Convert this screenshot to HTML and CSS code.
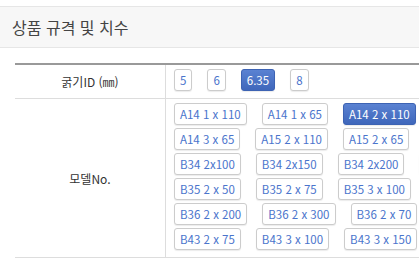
FILE: index.html
```html
<!DOCTYPE html>
<html lang="ko">
<head>
    <meta charset="UTF-8">
    <meta name="viewport" content="width=device-width, initial-scale=1.0">
    <title>상품 규격 및 치수</title>
    <link rel="stylesheet" href="styles.css">
</head>
<body>
    <!-- Section Title -->
    <div class="section-title">
        <h2>상품 규격 및 치수</h2>
    </div>

    <!-- Spec Table -->
    <div class="spec-wrap">
        <table class="spec-table">
            <tr class="size-row">
                <th>굵기ID (㎜)</th>
                <td>
                    <div class="opt-row">
                        <a href="#" class="opt-btn">5</a>
                        <a href="#" class="opt-btn">6</a>
                        <a href="#" class="opt-btn active">6.35</a>
                        <a href="#" class="opt-btn">8</a>
                    </div>
                </td>
            </tr>
            <tr>
                <th>모델No.</th>
                <td>
                    <div class="opt-row">
                        <a href="#" class="opt-btn">A14 1 x 110</a>
                        <a href="#" class="opt-btn">A14 1 x 65</a>
                        <a href="#" class="opt-btn active">A14 2 x 110</a>
                    </div>
                    <div class="opt-row">
                        <a href="#" class="opt-btn">A14 3 x 65</a>
                        <a href="#" class="opt-btn">A15 2 x 110</a>
                        <a href="#" class="opt-btn">A15 2 x 65</a>
                    </div>
                    <div class="opt-row">
                        <a href="#" class="opt-btn">B34 2x100</a>
                        <a href="#" class="opt-btn">B34 2x150</a>
                        <a href="#" class="opt-btn">B34 2x200</a>
                        <a href="#" class="opt-btn">B34 3x100</a>
                    </div>
                    <div class="opt-row">
                        <a href="#" class="opt-btn">B35 2 x 50</a>
                        <a href="#" class="opt-btn">B35 2 x 75</a>
                        <a href="#" class="opt-btn">B35 3 x 100</a>
                        <a href="#" class="opt-btn">B35 3 x 50</a>
                    </div>
                    <div class="opt-row">
                        <a href="#" class="opt-btn">B36 2 x 200</a>
                        <a href="#" class="opt-btn">B36 2 x 300</a>
                        <a href="#" class="opt-btn">B36 2 x 70</a>
                    </div>
                    <div class="opt-row">
                        <a href="#" class="opt-btn">B43 2 x 75</a>
                        <a href="#" class="opt-btn">B43 3 x 100</a>
                        <a href="#" class="opt-btn">B43 3 x 150</a>
                    </div>
                </td>
            </tr>
        </table>
    </div>
</body>
</html>
```

FILE: styles.css
```css
/* General Styles */
body {
    margin: 0;
    padding-top: 6px;
    font-family: "Noto Sans CJK KR", "Noto Sans", sans-serif;
    color: #333;
    background: #fff;
    overflow: hidden;
}

/* Section Title */
.section-title {
    background-color: #f7f7f7;
    border-top: 1px solid #e6e6e6;
    border-bottom: 1px solid #e6e6e6;
    padding: 0 12px;
    height: 40px;
    display: flex;
    align-items: center;
}
.section-title h2 {
    margin: 0;
    font-size: 16px;
    font-weight: normal;
    color: #444;
}

/* Spec Table */
.spec-wrap {
    margin-top: 15px;
    padding-left: 15px;
}
.spec-table {
    width: 500px;
    border-collapse: collapse;
    border-top: 2px solid #999;
    border-bottom: 1px solid #ddd;
}
.spec-table th {
    width: 150px;
    padding: 0;
    font-size: 12px;
    font-weight: normal;
    color: #333;
    text-align: center;
    vertical-align: middle;
    border-right: 1px solid #ddd;
}
.spec-table td {
    padding: 4px 8px;
}
.size-row th,
.size-row td {
    border-bottom: 1px solid #ddd;
}

.opt-row {
    display: flex;
    gap: 15px;
    margin-bottom: 3px;
}
.opt-btn {
    display: inline-block;
    height: 22px;
    line-height: 20px;
    padding: 0 5px;
    box-sizing: border-box;
    border: 1px solid #ccc;
    border-radius: 3px;
    box-shadow: 0 1px 1px rgba(0, 0, 0, 0.08);
    background-color: #fff;
    color: #4a74cc;
    font-size: 11.5px;
    text-decoration: none;
    white-space: nowrap;
}
.opt-btn.active {
    background: linear-gradient(#5a82d2, #3f67bb);
    border-color: #3d63b3;
    color: #fff;
}
```
